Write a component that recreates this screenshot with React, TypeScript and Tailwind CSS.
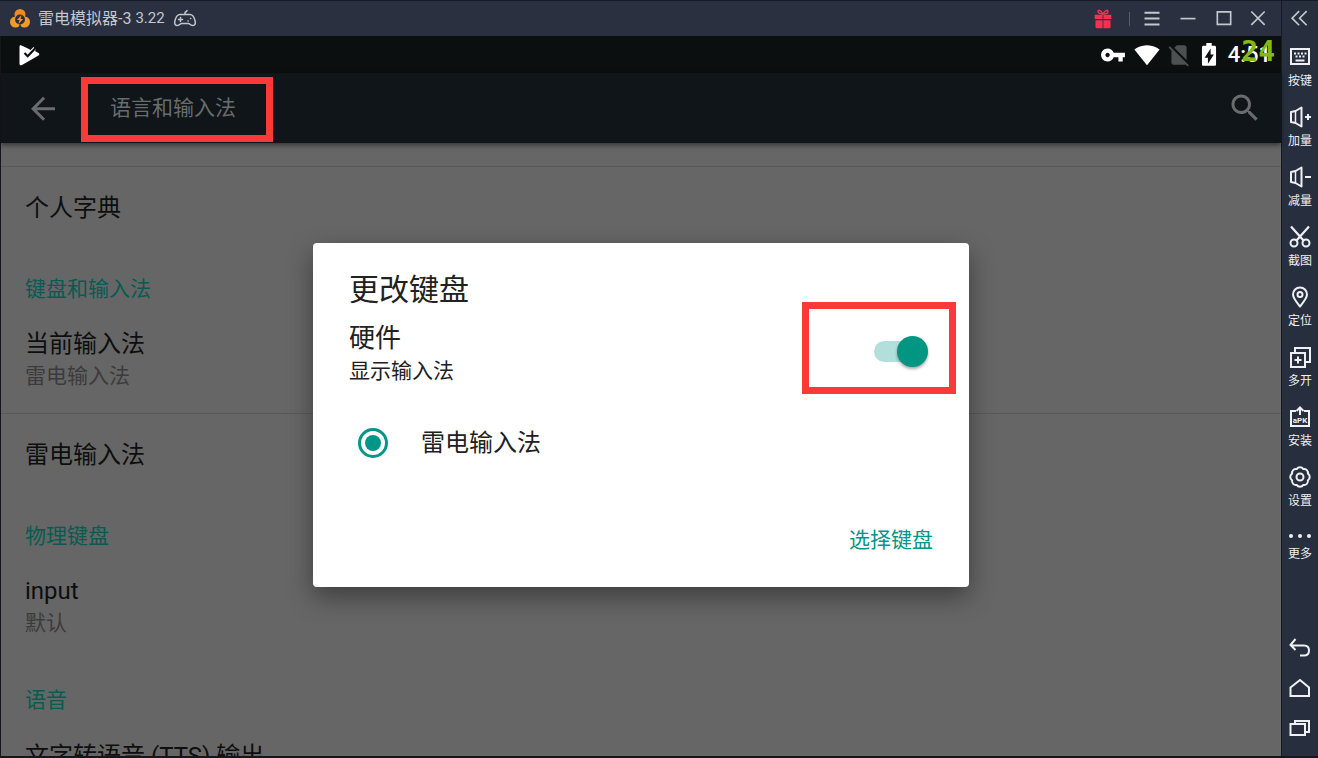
import type { ReactNode } from "react";

type IconProps = { children: ReactNode; className?: string };

// Outline icon on a 24px grid
function Line({ children, className = "size-6" }: IconProps) {
  return (
    <svg
      viewBox="0 0 24 24"
      className={className}
      fill="none"
      stroke="currentColor"
      strokeWidth="2"
      aria-hidden="true"
    >
      {children}
    </svg>
  );
}

// Filled icon on a 24px grid
function Solid({ children, className = "size-6" }: IconProps) {
  return (
    <svg viewBox="0 0 24 24" className={className} fill="currentColor" aria-hidden="true">
      {children}
    </svg>
  );
}

const speaker = (
  <>
    <path d="M3 7l4.500-1L13.500 2.500v19L7.500 18 3 17z" strokeLinejoin="round" />
    <path d="M7.500 6v12" strokeWidth="1.500" />
  </>
);

const tools = [
  {
    label: "按键",
    icon: (
      <Line>
        <path d="M3 4h18v15H3z" />
        <path d="M6 8.500h2m1.500 0h2m1.500 0h2m1.500 0h2M7.500 11.500h2m1.500 0h2m1.500 0h2M7.500 15.500h9" />
      </Line>
    ),
  },
  {
    label: "加量",
    icon: (
      <Line>
        {speaker}
        <path d="M17 12h6M20 9v6" />
      </Line>
    ),
  },
  {
    label: "减量",
    icon: (
      <Line>
        {speaker}
        <path d="M17 12h6" />
      </Line>
    ),
  },
  {
    label: "截图",
    icon: (
      <Line>
        <path d="M3 1.500L16 16M21 1.500L8 16" strokeWidth="2.200" />
        <circle cx="6" cy="18" r="3.500" />
        <circle cx="18" cy="18" r="3.500" />
      </Line>
    ),
  },
  {
    label: "定位",
    icon: (
      <Line>
        <path d="M12 21.500C8 16.500 5 13 5 9.500a7 7 0 0 1 14 0c0 3.500-3 7-7 12z" />
        <circle cx="12" cy="9.500" r="2.500" />
      </Line>
    ),
  },
  {
    label: "多开",
    icon: (
      <Line>
        <path d="M3 8h14v14H3zM7 8V3h15v14h-5M6.500 15h7M10 11.500v7" />
      </Line>
    ),
  },
  {
    label: "安装",
    icon: (
      <Line>
        <path d="M8 6H3v15h18V6h-5M12 10V3M8.500 6L12 2.500 15.500 6" />
        <text
          x="12"
          y="18"
          textAnchor="middle"
          fill="currentColor"
          stroke="none"
          fontSize="8"
          fontWeight="700"
          fontFamily="Roboto, sans-serif"
        >
          aPK
        </text>
      </Line>
    ),
  },
  {
    label: "设置",
    icon: (
      <Line>
        <path
          strokeLinejoin="round"
          d="M8.700 4.100a3.900 3.900 0 0 1 6.600 0a3.900 3.900 0 0 1 4.600 4.600a3.900 3.900 0 0 1 0 6.600a3.900 3.900 0 0 1-4.600 4.600a3.900 3.900 0 0 1-6.600 0a3.900 3.900 0 0 1-4.600-4.600a3.900 3.900 0 0 1 0-6.600a3.900 3.900 0 0 1 4.600-4.600z"
        />
        <circle cx="12" cy="12" r="3.500" />
      </Line>
    ),
  },
];

function TitleBar() {
  return (
    <header className="flex h-9 shrink-0 items-center border-t border-[#141a26] bg-[#2a303f] pl-2 text-[#c3c7cf]">
      <svg viewBox="0 0 24 24" className="size-6" aria-hidden="true">
        <circle cx="12" cy="7.500" r="5.500" fill="#f08c1e" />
        <circle cx="7.500" cy="15" r="5.500" fill="#f39a2b" />
        <circle cx="16.500" cy="15" r="5.500" fill="#f39a2b" />
        <circle cx="12" cy="12.500" r="5" fill="#2a303f" />
        <path d="M13.500 8L9 13h2.500L10.500 17l4.500-5h-2.500z" fill="#f39a2b" />
        <path d="M12 17.500v4" stroke="#2a303f" strokeWidth="1.500" />
      </svg>
      <span className="ml-1.5 text-base">雷电模拟器-3</span>
      <span className="ml-1 text-[15px]">3.22</span>
      <svg
        viewBox="0 0 24 20"
        className="ml-2 h-5 w-6"
        fill="none"
        stroke="currentColor"
        strokeWidth="1.500"
        strokeLinecap="round"
        aria-hidden="true"
      >
        <path d="M7 5.500h10c3 0 4 2 5 6 .8 3.500 0 5-2 5-1.800 0-2.700-1.500-4.500-2h-7c-1.800.5-2.700 2-4.500 2-2 0-2.800-1.500-2-5 1-4 2-6 5-6zM12 5.500V4c0-1.500 2-1 2-2.500" />
        <path d="M5.500 10.500h4M7.500 8.500v4M15 12h.2M17.500 9.500h.2" />
      </svg>
      <div className="ml-auto flex items-center pr-[7px]">
        <button aria-label="礼包" className="flex h-9 w-9 items-center justify-center text-[#f8304f]">
          <Solid className="size-5">
            <path d="M2 7h9.500v5H2zM12.500 7H22v5h-9.500zM3 13.500h8.500V23H4.500A1.500 1.500 0 0 1 3 21.500zM12.500 13.500H21v8a1.500 1.500 0 0 1-1.500 1.500h-7z" />
            <path
              d="M12 6C9 6 6 5 6 3s3-2.500 6 3c3-5.500 6-5 6-3s-3 3-6 3z"
              fill="none"
              stroke="currentColor"
              strokeWidth="1.800"
            />
          </Solid>
        </button>
        <span className="mr-1 ml-2 h-3.5 w-px bg-[#565c69]" />
        <button aria-label="菜单" className="flex h-9 w-9 items-center justify-center">
          <Line className="size-5">
            <path d="M3 4.500h18M3 11.500h18M3 18.500h18" strokeWidth="2.400" />
          </Line>
        </button>
        <button aria-label="最小化" className="flex h-9 w-9 items-center justify-center">
          <Line className="size-5">
            <path d="M3 11.500h18" />
          </Line>
        </button>
        <button aria-label="最大化" className="flex h-9 w-9 items-center justify-center">
          <Line className="size-5">
            <path d="M4 3.500h16v15H4z" />
          </Line>
        </button>
        <button aria-label="关闭" className="flex h-9 w-8 items-center justify-center">
          <Line className="size-5">
            <path d="M4 3l16 16M20 3L4 19" />
          </Line>
        </button>
      </div>
    </header>
  );
}

function StatusBar() {
  return (
    <div className="flex h-[37px] shrink-0 items-center bg-[#0b0f10] pr-2.5 pl-4 text-white">
      <Solid>
        <path d="M2.500 3.500c0-1 1-1.500 2-1L11 5.500 13.500 7l3-3 2.500 2.500-1 1.500 3.500 2c1 .6 1 1.800 0 2.500L5 22c-1.500.8-2.500.2-2.500-1.500z" />
        <path d="M7.500 10l3.200 3.200L18.500 5" fill="none" stroke="#0b0f10" strokeWidth="2.200" />
      </Solid>
      <div className="ml-auto flex items-center">
        <Solid className="size-[26px]">
          <path d="M12.650 10C11.830 7.670 9.610 6 7 6c-3.310 0-6 2.690-6 6s2.690 6 6 6c2.610 0 4.830-1.670 5.650-4H17v4h4v-4h2v-4H12.650zM7 14c-1.100 0-2-.9-2-2s.9-2 2-2 2 .9 2 2-.9 2-2 2z" />
        </Solid>
        <Solid className="ml-2 size-[26px]">
          <path d="M12.010 21.490L23.640 7c-.450-.340-4.930-4-11.640-4C5.280 3 .810 6.660.360 7l11.630 14.490.010.010.010-.010z" />
        </Solid>
        <Solid className="ml-1.5 size-[26px] text-[#4d5051]">
          <path d="M18.990 5c0-1.100-.890-2-1.990-2h-7L7.660 5.340 19 16.680 18.990 5zM3.650 3.880L2.380 5.150 5 7.770V19c0 1.100.9 2 2 2h10.010c.350 0 .670-.1.960-.260l1.880 1.880 1.270-1.270L3.650 3.880z" />
        </Solid>
        <Solid className="ml-1 size-[26px]">
          <path d="M17 3.500h-2.500V1h-5v2.500H7C6 3.500 5.500 4 5.500 5v15.500c0 1 .5 1.500 1.500 1.500h10c1 0 1.500-.5 1.500-1.500V5c0-1-.5-1.500-1.500-1.500zM11 20v-5.500H8L13.500 6v5.500h3L11 20z" />
        </Solid>
        <div className="relative ml-1.5">
          <time className="text-[22px] font-medium">4:51</time>
          {/* frame rate counter drawn over the clock */}
          <output
            aria-label="FPS"
            className="absolute -top-0.5 -right-1 font-['DejaVu_Sans_Mono',monospace] text-[28px] leading-8 font-bold text-[#84b812]"
          >
            24
          </output>
        </div>
      </div>
    </div>
  );
}

function Toolbar() {
  return (
    <div className="relative flex h-[70px] shrink-0 items-center bg-[#0f1518] pr-[18px] pl-6 text-[#696c6d] shadow-[0_2px_5px_rgba(0,0,0,0.5)]">
      <button aria-label="返回">
        <Solid className="size-9">
          <path d="M20 11.500H7.830l5.590-5.590L12 4.500l-8 8 8 8 1.410-1.410L7.830 13.500H20v-2z" />
        </Solid>
      </button>
      <h1 className="mt-0.5 ml-5 flex h-[65px] items-center border-7 border-[#f93a38] px-[22px] pr-[30px] text-[21px]">
        语言和输入法
      </h1>
      <button aria-label="搜索" className="ml-auto">
        <Solid className="size-9">
          <path d="M15.500 14h-.790l-.280-.270C15.410 12.590 16 11.110 16 9.500 16 5.910 13.090 3 9.500 3S3 5.910 3 9.500 5.910 16 9.500 16c1.610 0 3.090-.590 4.230-1.570l.270.280v.790l5 4.990L20.490 19l-4.990-5zm-6 0C7.010 14 5 11.990 5 9.500S7.010 5 9.500 5 14 7.010 14 9.500 11.990 14 9.500 14z" />
        </Solid>
      </button>
    </div>
  );
}

function Category({ children }: { children: ReactNode }) {
  return (
    <h2 className="flex h-[62px] items-center px-6 pt-5 text-[21px] text-[#085b52]">{children}</h2>
  );
}

function Preference({ title, summary }: { title: string; summary?: string }) {
  if (!summary) {
    return <div className="flex h-[82px] items-center px-6 text-2xl text-[#0e0e0e]">{title}</div>;
  }
  return (
    <div className="h-[102px] px-6 pt-[17px]">
      <p className="text-2xl leading-8 text-[#0e0e0e]">{title}</p>
      <p className="text-[21px] leading-8 text-[#3b3b3b]">{summary}</p>
    </div>
  );
}

function Settings() {
  return (
    <main className="min-h-0 flex-1 overflow-hidden bg-[#666]">
      <div className="h-6 border-b border-[#595959]" />
      <Preference title="个人字典" />
      <Category>键盘和输入法</Category>
      <Preference title="当前输入法" summary="雷电输入法" />
      <hr className="border-[#595959]" />
      <Preference title="雷电输入法" />
      <Category>物理键盘</Category>
      <Preference title="input" summary="默认" />
      <Category>语音</Category>
      <div className="px-6 pt-[18px] text-2xl leading-8 text-[#0e0e0e]">文字转语音 (TTS) 输出</div>
    </main>
  );
}

function KeyboardDialog() {
  return (
    <div className="absolute inset-x-0 top-[37px] bottom-0 flex items-center justify-center">
      <section
        role="dialog"
        aria-labelledby="dialog-title"
        className="w-full max-w-[656px] rounded-[4px] bg-white pt-6 pb-[22px] text-[#212121] shadow-[0_10px_26px_rgba(0,0,0,0.4)]"
      >
        <div className="flex items-start justify-between pr-[13px] pl-9">
          <div>
            <h2 id="dialog-title" className="text-[30px] leading-[46px]">
              更改键盘
            </h2>
            <label htmlFor="show-ime" className="mt-1 block">
              <span className="block text-[26px] leading-[42px]">硬件</span>
              <span className="block text-[21px] leading-6">显示输入法</span>
            </label>
          </div>
          <div className="mt-[35px] flex h-[92px] w-[154px] items-center justify-end border-7 border-[#f93a38] pt-2 pr-[21px]">
            <input
              id="show-ime"
              type="checkbox"
              role="switch"
              defaultChecked
              className="relative h-[31px] w-[54px] appearance-none before:absolute before:inset-y-[5px] before:left-0 before:w-12 before:rounded-full before:bg-[#b2dfdb] after:absolute after:top-0 after:right-0 after:size-[31px] after:rounded-full after:bg-[#009682] after:shadow-[0_2px_3px_rgba(0,0,0,0.35)]"
            />
          </div>
        </div>
        <label className="mt-4 flex h-[67px] items-center gap-6 pl-9 text-2xl">
          <span className="flex w-12 justify-center">
            <input
              type="radio"
              name="ime"
              defaultChecked
              className="size-[30px] appearance-none rounded-full border-3 border-[#009688] bg-[#009688] bg-clip-content p-[4px]"
            />
          </span>
          雷电输入法
        </label>
        <div className="mt-10 flex justify-end pr-9">
          <button className="h-12 text-[21px] text-[#009688]">选择键盘</button>
        </div>
      </section>
    </div>
  );
}

function SideBar() {
  return (
    <aside className="flex w-[37px] shrink-0 flex-col border-t border-l border-[#141a26] bg-[#272e3d] pb-2 text-[#eef0f3]">
      <button aria-label="收起" className="flex h-[35px] shrink-0 items-center justify-center text-[#c3c7cf]">
        <Line className="size-5">
          <path d="M11 2.500l-8.500 8.500L11 19.500M20 2.500L11.500 11l8.500 8.500" />
        </Line>
      </button>
      {tools.map((tool) => (
        <button key={tool.label} className="flex h-[60px] shrink-0 flex-col items-center gap-1 pt-[9px]">
          {tool.icon}
          <span className="text-xs">{tool.label}</span>
        </button>
      ))}
      <button className="flex h-[60px] shrink-0 flex-col items-center gap-1 pt-4">
        <svg viewBox="0 0 24 10" className="h-2.5 w-6" fill="currentColor" aria-hidden="true">
          <circle cx="3" cy="4" r="2" />
          <circle cx="12" cy="4" r="2" />
          <circle cx="21" cy="4" r="2" />
        </svg>
        <span className="text-xs">更多</span>
      </button>
      <button aria-label="后退" className="mt-auto flex h-10 items-center justify-center">
        <Line>
          <path d="M7.500 3L2.500 9l5 5M2.500 9.500H16c3 0 5 2 5 5s-2 5-5 5h-4" />
        </Line>
      </button>
      <button aria-label="主页" className="flex h-10 items-center justify-center">
        <Line>
          <path d="M2.500 11.500L12 4l9 7.500V20H2.500z" />
        </Line>
      </button>
      <button aria-label="最近任务" className="flex h-10 items-center justify-center">
        <Line>
          <path d="M2.500 8H17v11H2.500zM7 8V5h14v11h-4" />
        </Line>
      </button>
    </aside>
  );
}

export default function App() {
  return (
    <div className="flex h-screen w-full overflow-hidden border-b-2 border-[#15171f] bg-[#15171f] font-['Roboto','Noto_Sans_CJK_SC',sans-serif]">
      <div className="flex min-w-0 flex-1 flex-col">
        <TitleBar />
        <div className="relative ml-px flex min-h-0 flex-1 flex-col">
          <StatusBar />
          <Toolbar />
          <Settings />
          <KeyboardDialog />
        </div>
      </div>
      <SideBar />
    </div>
  );
}
